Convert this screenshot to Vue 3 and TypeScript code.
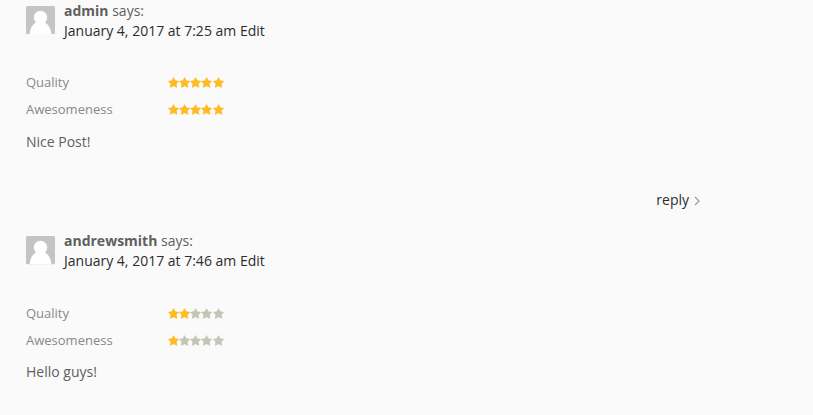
<script setup lang="ts">
interface Rating { label: string; score: number }
interface Comment { author: string; date: string; ratings: Rating[]; text: string; reply: boolean }

const comments: Comment[] = [
  {
    author: 'admin', date: 'January 4, 2017 at 7:25 am',
    ratings: [{ label: 'Quality', score: 5 }, { label: 'Awesomeness', score: 5 }],
    text: 'Nice Post!', reply: true,
  },
  {
    author: 'andrewsmith', date: 'January 4, 2017 at 7:46 am',
    ratings: [{ label: 'Quality', score: 2 }, { label: 'Awesomeness', score: 1 }],
    text: 'Hello guys!', reply: false,
  },
]
</script>

<template>
  <main class="comments">
    <article v-for="c in comments" :key="c.author" class="comment">
      <header class="head">
        <svg class="avatar" viewBox="0 0 29 28" preserveAspectRatio="none" aria-hidden="true">
          <rect width="29" height="28" rx="1.5" fill="#c4c4c4" />
          <ellipse cx="14.5" cy="11.4" rx="6.7" ry="6.6" fill="#fff" />
          <path d="M3.600 28c.4-5.500 2.800-10 7.200-12.500h7.400c4.200 2.500 6.800 7 7.200 12.500z" fill="#fff" />
        </svg>
        <div class="meta">
          <div><b>{{ c.author }}</b> says:</div>
          <div class="date"><a>{{ c.date }}</a> <a>Edit</a></div>
        </div>
      </header>
      <div class="ratings">
        <div v-for="r in c.ratings" :key="r.label" class="rating">
          <span class="label">{{ r.label }}</span>
          <span class="stars">
            <svg v-for="n in 5" :key="n" class="star" :class="{ on: n <= r.score }" viewBox="0 0 11 11">
              <path d="M5.500 .7 7.100 3.800 10.500 4.300 8.100 6.800 8.700 10.300 5.500 8.700 2.300 10.300 2.900 6.800 .5 4.300 3.900 3.800z" />
            </svg>
          </span>
        </div>
      </div>
      <p class="text">{{ c.text }}</p>
      <div v-if="c.reply" class="reply">
        <a>reply</a>
        <svg class="chevron" viewBox="0 0 6 10"><path d="M1 1 5 5 1 9" /></svg>
      </div>
    </article>
  </main>
</template>

<style>
body { background: #fafafa; overflow: hidden; }
</style>

<style scoped>
.comments { height: 415px; overflow: hidden; box-sizing: border-box; padding: 1px 113px 0 26px; font: 14px/20px "Open Sans", sans-serif; color: #5f5f5f; }
.comment { height: 230.4px; }
.head { display: flex; gap: 9px; height: 67.7px; }
.avatar { width: 29px; height: 28.3px; margin-top: 5px; }
.date { color: #2d2d2d; }
.rating { display: flex; align-items: center; height: 27px; font-size: 13px; color: #888; }
.label { width: 142px; }
.stars { display: flex; margin-top: 1.2px; }
.star { width: 11.15px; height: 11px; fill: #c5c5b5; stroke: #c5c5b5; stroke-width: .8; stroke-linejoin: round; }
.star.on { fill: #ffbb22; stroke: #ffbb22; }
.text { margin: 9.3px 0 0; }
.reply { display: flex; align-items: center; justify-content: flex-end; gap: 5px; margin-top: 38px; color: #2d2d2d; }
.chevron { width: 6px; height: 10px; margin-top: 3px; fill: none; stroke: #999; stroke-width: 1.2; }
</style>
